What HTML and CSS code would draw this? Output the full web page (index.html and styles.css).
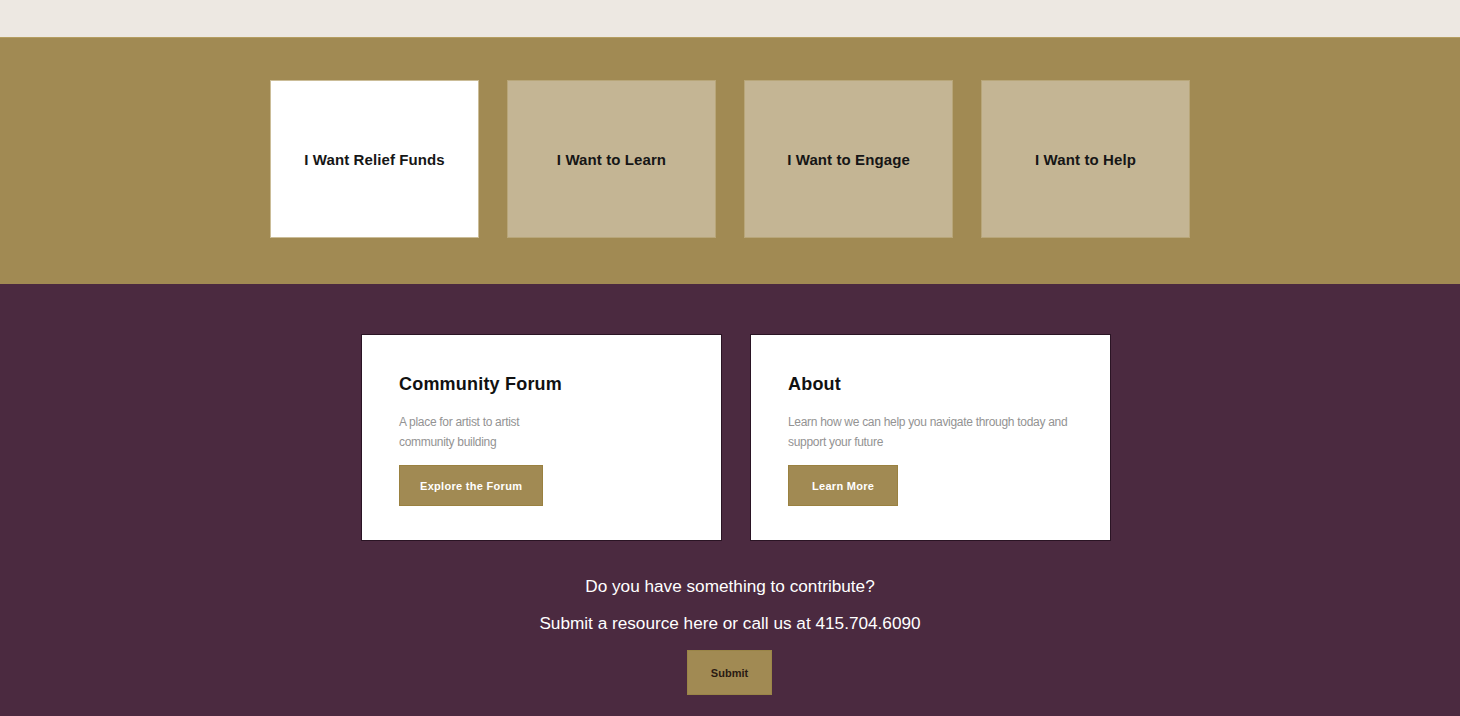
FILE: index.html
```html
<!DOCTYPE html>
<html>
<head>
<meta charset="utf-8">
<link rel="stylesheet" href="styles.css">
</head>
<body>
<div class="topbar"></div>
<section class="paths">
  <a class="tile tile-active">I Want Relief Funds</a>
  <a class="tile">I Want to Learn</a>
  <a class="tile">I Want to Engage</a>
  <a class="tile">I Want to Help</a>
</section>
<section class="lower">
  <div class="cards">
    <div class="card">
      <h2 class="card-title">Community Forum</h2>
      <p class="card-text">A place for artist to artist<br>community building</p>
      <a class="btn btn-wide">Explore the Forum</a>
    </div>
    <div class="card">
      <h2 class="card-title">About</h2>
      <p class="card-text">Learn how we can help you navigate through today and support your future</p>
      <a class="btn">Learn More</a>
    </div>
  </div>
  <p class="contrib">Do you have something to contribute?</p>
  <p class="contrib">Submit a resource here or call us at 415.704.6090</p>
  <a class="submit">Submit</a>
</section>
</body>
</html>
```
FILE: styles.css
```css
* { box-sizing: border-box; }
html, body { margin: 0; padding: 0; }
body {
  font-family: "Liberation Sans", Arial, sans-serif;
  background: #4b2a40;
  height: 716px;
  overflow: hidden;
}
.topbar {
  height: 38px;
  background: #ede8e2;
  border-bottom: 1px solid #b59e62;
}
.paths {
  background: #a18a53;
  height: 246px;
  display: flex;
  justify-content: center;
  gap: 28px;
  padding-top: 42px;
}
.tile {
  width: 209px;
  height: 158px;
  background: #c4b594;
  border: 1px solid #b8a679;
  display: flex;
  align-items: center;
  justify-content: center;
  padding-top: 1px;
  font-size: 15px;
  font-weight: bold;
  color: #161616;
  letter-spacing: 0.1px;
}
.tile-active {
  background: #ffffff;
  border-color: #cbbd98;
}
.lower {
  display: flex;
  flex-direction: column;
  align-items: center;
  padding-top: 50px;
}
.cards {
  display: flex;
  gap: 28px;
  padding-left: 12px;
}
.card {
  width: 361px;
  height: 207px;
  background: #fff;
  border: 1px solid #2a1424;
  padding: 38px 37px 0 37px;
}
.card-title {
  margin: 0;
  font-size: 18px;
  font-weight: bold;
  letter-spacing: 0.2px;
  color: #111;
  line-height: 22px;
}
.card-text {
  margin: 17px 0 13px 0;
  font-size: 12px;
  line-height: 20px;
  letter-spacing: -0.3px;
  color: #939393;
  font-weight: normal;
}
.btn {
  display: inline-flex;
  align-items: center;
  justify-content: center;
  height: 41px;
  padding: 0 23px;
  background: #a18a53;
  border: 1px solid #9a8140;
  color: #fff;
  font-size: 11px;
  font-weight: bold;
  letter-spacing: 0.3px;
}
.btn-wide {
  padding: 0 20px;
}
.contrib {
  margin: 0;
  color: #fff;
  font-size: 17.2px;
  line-height: 22px;
  text-align: center;
}
.contrib:first-of-type { margin-top: 34px; }
.contrib + .contrib { margin-top: 15px; }
.submit {
  margin-top: 16px;
  width: 85px;
  height: 45px;
  display: flex;
  align-items: center;
  justify-content: center;
  background: #a18a53;
  border: 1px solid #9a8547;
  color: #2a1a12;
  font-size: 11px;
  font-weight: bold;
  margin-left: -1px;
}
```
